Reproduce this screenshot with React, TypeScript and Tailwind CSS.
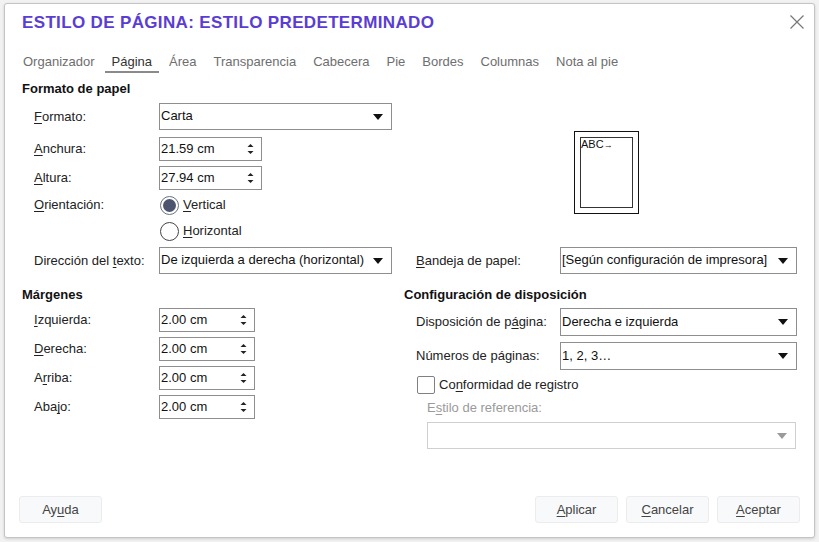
import React from "react";

const FONT = { fontFamily: '"Liberation Sans", Arial, sans-serif' };

// Label with one underlined mnemonic letter
function Mn({ text, at }: { text: string; at: number }) {
  return (
    <>
      {text.slice(0, at)}
      <span className="underline underline-offset-2">{text[at]}</span>
      {text.slice(at + 1)}
    </>
  );
}

function Arrow({ disabled }: { disabled?: boolean }) {
  return (
    <svg width="10" height="6" viewBox="0 0 10 6" className="shrink-0">
      <path d="M0 0 L10 0 L5 6 Z" fill={disabled ? "#9a9a9a" : "#111"} />
    </svg>
  );
}

function Select({ value, w, h = 27, disabled }: { value: string; w: number; h?: number; disabled?: boolean }) {
  return (
    <div
      className={`flex items-center justify-between pl-[1px] pr-[8px] border bg-white ${disabled ? "border-[#cfcfcf]" : "border-[#8e8e8e]"}`}
      style={{ width: w, height: h }}
    >
      <span className="text-[13px] text-[#111] truncate -mt-[1px]">{value}</span>
      <Arrow disabled={disabled} />
    </div>
  );
}

function Spin({ value, w }: { value: string; w: number }) {
  return (
    <div className="flex items-center justify-between pl-[1px] pr-[7px] h-[24px] border border-[#8e8e8e] bg-white" style={{ width: w }}>
      <span className="text-[13px] text-[#111]">{value}</span>
      <svg width="7" height="12" viewBox="0 0 7 12">
        <path d="M0.5 4 L6.5 4 L3.5 1 Z" fill="#222" />
        <path d="M0.5 8 L6.5 8 L3.5 11 Z" fill="#222" />
      </svg>
    </div>
  );
}

function Row({ label, children, mt, labelW = 125 }: { label: React.ReactNode; children: React.ReactNode; mt: number; labelW?: number }) {
  return (
    <div className="flex items-center" style={{ marginTop: mt }}>
      <div className="text-[13px] text-[#222]" style={{ width: labelW }}>{label}</div>
      {children}
    </div>
  );
}

function Radio({ checked, label, mt }: { checked?: boolean; label: React.ReactNode; mt: number }) {
  return (
    <div className="flex items-center h-[24px]" style={{ marginTop: mt }}>
      <div className="w-[125px]" />
      <div className={`w-[19px] h-[19px] rounded-full border flex items-center justify-center ml-[1px] ${checked ? "border-[#6b7080]" : "border-[#444]"}`}>
        {checked && <div className="w-[13px] h-[13px] rounded-full bg-[#4d5470]" />}
      </div>
      <span className="ml-[4px] text-[13px] text-[#222]">{label}</span>
    </div>
  );
}

function Btn({ children }: { children: React.ReactNode }) {
  return (
    <div className="w-[83px] h-[27px] flex items-center justify-center rounded-[3px] border border-[#ececec] bg-[#f8f9fa] text-[13px] text-[#444]">
      {children}
    </div>
  );
}

const TABS = ["Organizador", "Página", "Área", "Transparencia", "Cabecera", "Pie", "Bordes", "Columnas", "Nota al pie"];

export default function App() {
  return (
    <div className="w-[819px] h-[542px] bg-[#f2f2f2] overflow-hidden" style={FONT}>
      <div className="ml-[4px] mt-[3px] w-[811px] h-[535px] bg-white border border-[#c4c4c4] rounded-[3px] shadow-[0_1px_3px_rgba(0,0,0,0.15)] flex flex-col">
        {/* Title bar */}
        <div className="h-[38px] flex items-center justify-between pl-[17px] pr-[9px]">
          <span className="text-[17px] font-bold text-[#5a3dd3] tracking-[0.35px]">ESTILO DE PÁGINA: ESTILO PREDETERMINADO</span>
          <svg width="16" height="16" viewBox="0 0 16 16" className="-mt-[3px]">
            <path d="M1.5 1.5 L14.5 14.5 M14.5 1.5 L1.5 14.5" stroke="#777" strokeWidth="1.2" />
          </svg>
        </div>

        {/* Tabs */}
        <div className="flex gap-[3px] mt-[12px] pl-[11px]">
          {TABS.map((t) => (
            <div key={t} className="flex flex-col items-stretch">
              <span className={`px-[7px] h-[16px] leading-[16px] text-[13px] ${t === "Página" ? "text-[#333]" : "text-[#6e6e6e]"}`}>{t}</span>
              <div className={`mt-[1px] h-[2px] ${t === "Página" ? "bg-[#8a8a8a]" : ""}`} />
            </div>
          ))}
        </div>

        {/* Formato de papel */}
        <div className="flex pl-[17px]">
          <div className="w-[382px] flex flex-col">
            <div className="mt-[8px] h-[16px] leading-[16px] text-[13px] font-bold text-[#111]">Formato de papel</div>
            <div className="pl-[12px]">
              <Row mt={6} label={<Mn text="Formato:" at={0} />}><Select value="Carta" w={233} /></Row>
              <Row mt={7} label={<Mn text="Anchura:" at={0} />}><Spin value="21.59 cm" w={103} /></Row>
              <Row mt={5} label={<Mn text="Altura:" at={0} />}><Spin value="27.94 cm" w={103} /></Row>
              <div className="flex items-center h-[24px] mt-[3px]">
                <div className="w-[125px] text-[13px] text-[#222]"><Mn text="Orientación:" at={0} /></div>
                <div className="w-[19px] h-[19px] rounded-full border border-[#6b7080] flex items-center justify-center ml-[1px]">
                  <div className="w-[13px] h-[13px] rounded-full bg-[#4d5470]" />
                </div>
                <span className="ml-[4px] text-[13px] text-[#222]"><Mn text="Vertical" at={0} /></span>
              </div>
              <Radio mt={2} label={<Mn text="Horizontal" at={0} />} />
            </div>
          </div>
          {/* Preview */}
          <div className="ml-[170px] mt-[58px] w-[65px] h-[83px] border border-[#111] p-[5px]">
            <div className="w-full h-full border border-[#333] relative">
              <span className="absolute left-[0px] top-[0px] text-[11px] leading-[12px] text-[#111]">
                ABC<span className="text-[9px]">→</span>
              </span>
            </div>
          </div>
        </div>

        {/* Dirección / Bandeja */}
        <div className="flex pl-[17px] mt-[4px]">
          <div className="w-[382px] pl-[12px]">
            <Row mt={0} label={<Mn text="Dirección del texto:" at={14} />}><Select value="De izquierda a derecha (horizontal)" w={233} /></Row>
          </div>
          <div className="pl-[12px]">
            <Row mt={0} labelW={144} label={<Mn text="Bandeja de papel:" at={0} />}><Select value="[Según configuración de impresora]" w={237} /></Row>
          </div>
        </div>

        {/* Márgenes / Configuración */}
        <div className="flex pl-[17px]">
          <div className="w-[382px] flex flex-col">
            <div className="mt-[13px] h-[16px] leading-[16px] text-[13px] font-bold text-[#111]">Márgenes</div>
            <div className="pl-[12px]">
              <Row mt={5} label={<Mn text="Izquierda:" at={0} />}><Spin value="2.00 cm" w={96} /></Row>
              <Row mt={5} label={<Mn text="Derecha:" at={0} />}><Spin value="2.00 cm" w={96} /></Row>
              <Row mt={5} label={<Mn text="Arriba:" at={1} />}><Spin value="2.00 cm" w={96} /></Row>
              <Row mt={5} label={<Mn text="Abajo:" at={3} />}><Spin value="2.00 cm" w={96} /></Row>
            </div>
          </div>
          <div className="flex flex-col">
            <div className="mt-[13px] h-[16px] leading-[16px] text-[13px] font-bold text-[#111]">Configuración de disposición</div>
            <div className="pl-[12px]">
              <Row mt={5} labelW={144} label={<Mn text="Disposición de página:" at={16} />}><Select value="Derecha e izquierda" w={237} h={28} /></Row>
              <Row mt={6} labelW={144} label="Números de páginas:"><Select value="1, 2, 3…" w={237} h={28} /></Row>
              <div className="flex items-center mt-[5px] h-[19px]">
                <div className="w-[18px] h-[18px] rounded-[2px] border border-[#808080] bg-white ml-[1px]" />
                <span className="ml-[4px] text-[13px] text-[#222]"><Mn text="Conformidad de registro" at={2} /></span>
              </div>
              <div className="ml-[11px] mt-[6px] h-[16px] leading-[16px] text-[13px] text-[#9a9a9a]"><Mn text="Estilo de referencia:" at={1} /></div>
              <div className="ml-[11px] mt-[6px]"><Select value="" w={369} h={27} disabled /></div>
            </div>
          </div>
        </div>

        {/* Footer */}
        <div className="mt-auto mb-[14px] px-[14px] flex items-center">
          <Btn><Mn text="Ayuda" at={2} /></Btn>
          <div className="ml-auto flex gap-[8px]">
            <Btn><Mn text="Aplicar" at={0} /></Btn>
            <Btn><Mn text="Cancelar" at={0} /></Btn>
            <Btn><Mn text="Aceptar" at={0} /></Btn>
          </div>
        </div>
      </div>
    </div>
  );
}
